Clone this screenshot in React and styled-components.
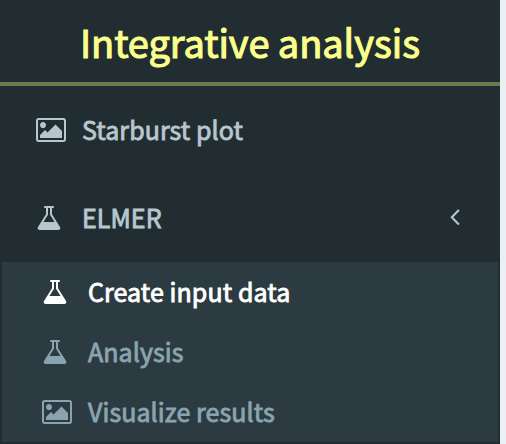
import React from "react";
import styled, { createGlobalStyle } from "styled-components";

const GlobalStyle = createGlobalStyle`
  * { box-sizing: border-box; }
  body {
    margin: 0;
    background: #ecf0f5;
    font-family: "Noto Sans CJK SC", "Noto Sans", sans-serif;
    overflow: hidden;
  }
`;

const Sidebar = styled.aside`
  width: 500px;
  height: 444px;
  background: #222d32;
  display: flex;
  flex-direction: column;
`;

const Heading = styled.h1`
  margin: 0;
  height: 86px;
  padding-left: 80px;
  border-bottom: 4px solid #6b7950;
  color: #fbff8c;
  font-size: 38px;
  font-weight: 400;
  letter-spacing: -0.07px;
  line-height: 84px;
  white-space: nowrap;
  -webkit-text-stroke: 1.1px currentColor;
`;

const MenuItem = styled.a`
  display: flex;
  align-items: center;
  height: 88px;
  padding: 0 40px 0 36px;
  color: #b8c7ce;
`;

const Submenu = styled.nav`
  width: 496px;
  height: 180px;
  margin: 0 2px;
  background: #2c3b41;
`;

const SubmenuItem = styled.a`
  display: flex;
  align-items: center;
  height: 60px;
  padding-left: 40px;
  color: ${(p) => (p.$active ? "#ffffff" : "#8aa4af")};
`;

const Label = styled.span`
  flex: 1;
  margin-left: ${(p) => p.$gap}px;
  padding-bottom: 2px;
  font-size: 25px;
  font-weight: 400;
  letter-spacing: 0.08px;
  line-height: 36px;
  white-space: nowrap;
  -webkit-text-stroke: 0.85px currentColor;
`;

const Glyph = styled.svg`
  flex: none;
  display: block;
  width: ${(p) => p.$width}px;
  height: 28px;
  fill: currentColor;
`;

const PictureIcon = () => (
  <Glyph $width={30} viewBox="-64 0 1920 1792">
    <path d="M576 576q0 80-56 136t-136 56-136-56-56-136 56-136 136-56 136 56 56 136zm1024 384v448h-1408v-192l320-320 160 160 512-512zm96-704h-1600q-13 0-22.5 9.5t-9.5 22.5v1216q0 13 9.5 22.5t22.5 9.5h1600q13 0 22.5-9.5t9.5-22.5v-1216q0-13-9.5-22.5t-22.5-9.5zm160 32v1216q0 66-47 113t-113 47h-1600q-66 0-113-47t-47-113v-1216q0-66 47-113t113-47h1600q66 0 113 47t47 113z" />
  </Glyph>
);

const FlaskIcon = () => (
  <Glyph $width={26} viewBox="0 -76 1664 1792">
    <path d="M1527 1372q56 89 21.5 152.5t-140.5 63.5h-1152q-106 0-140.5-63.5t21.5-152.5l503-793v-399h-64q-26 0-45-19t-19-45 19-45 45-19h512q26 0 45 19t19 45-19 45-45 19h-64v399zm-779-725l-272 429h712l-272-429-20-31v-436h-128v436z" />
  </Glyph>
);

const AngleLeftIcon = () => (
  <Glyph $width={10} viewBox="592 112 640 1792">
    <path d="M1203 544q0 13-10 23l-393 393 393 393q10 10 10 23t-10 23l-50 50q-10 10-23 10t-23-10l-466-466q-10-10-10-23t10-23l466-466q10-10 23-10t23 10l50 50q10 10 10 23z" />
  </Glyph>
);

export default function App() {
  return (
    <>
      <GlobalStyle />
      <Sidebar>
        <Heading>Integrative analysis</Heading>
        <MenuItem>
          <PictureIcon />
          <Label $gap={16}>Starburst plot</Label>
        </MenuItem>
        <MenuItem>
          <FlaskIcon />
          <Label $gap={20}>ELMER</Label>
          <AngleLeftIcon />
        </MenuItem>
        <Submenu>
          <SubmenuItem $active>
            <FlaskIcon />
            <Label $gap={20}>Create input data</Label>
          </SubmenuItem>
          <SubmenuItem>
            <FlaskIcon />
            <Label $gap={20}>Analysis</Label>
          </SubmenuItem>
          <SubmenuItem>
            <PictureIcon />
            <Label $gap={16}>Visualize results</Label>
          </SubmenuItem>
        </Submenu>
      </Sidebar>
    </>
  );
}
